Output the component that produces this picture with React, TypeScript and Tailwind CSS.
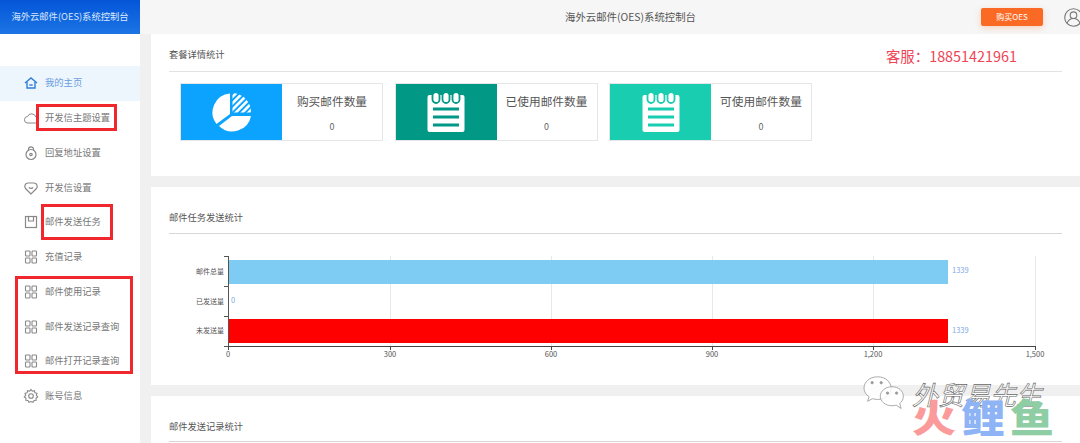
import React from "react";

const font = { fontFamily: '"Noto Sans CJK SC", "Noto Sans", sans-serif' };

function HomeIcon() {
  return (
    <svg width="16" height="16" viewBox="0 0 16 16" fill="none" stroke="#2f7fd8" strokeWidth="1.4">
      <path d="M2 8 8 3l6 5" />
      <path d="M4 7v6h8V7" />
      <path d="M6.300 10h3.400" />
    </svg>
  );
}
function CloudIcon() {
  return (
    <svg width="16" height="16" viewBox="0 0 16 16" fill="none" stroke="#888" strokeWidth="1">
      <path d="M4 13h8.500a3 3 0 0 0 .4-6A4.500 4.500 0 0 0 4.500 6.500 3.300 3.300 0 0 0 4 13Z" />
    </svg>
  );
}
function LockIcon() {
  return (
    <svg width="16" height="16" viewBox="0 0 16 16" fill="none" stroke="#888" strokeWidth="1.200">
      <circle cx="8" cy="9.500" r="5" />
      <path d="M5.500 5.500V4.300a2.500 2.500 0 0 1 5 0v1.200" />
      <circle cx="8" cy="9.500" r="1.200" />
    </svg>
  );
}
function HeartIcon() {
  return (
    <svg width="16" height="16" viewBox="0 0 16 16" fill="none" stroke="#888" strokeWidth="1.200">
      <path d="M8 14 2.500 8.500C1 6.500 2 3 5 3h6c3 0 4 3.500 2.500 5.500Z" />
      <path d="M5.800 7.500c1.300 1.100 3.100 1.100 4.400 0" />
    </svg>
  );
}
function SaveIcon() {
  return (
    <svg width="16" height="16" viewBox="0 0 16 16" fill="none" stroke="#888" strokeWidth="1.200">
      <rect x="2.500" y="2.500" width="11" height="11" />
      <path d="M5.500 2.500v4.500h5V2.500" />
    </svg>
  );
}
function GridIcon() {
  return (
    <svg width="16" height="16" viewBox="0 0 16 16" fill="none" stroke="#888" strokeWidth="1.100">
      <rect x="2.500" y="2" width="4.500" height="5" rx="0.800" />
      <rect x="9" y="2" width="4.500" height="5" rx="0.800" />
      <rect x="2.500" y="9" width="4.500" height="5" rx="0.800" />
      <rect x="9" y="9" width="4.500" height="5" rx="0.800" />
    </svg>
  );
}
function GearIcon() {
  return (
    <svg width="16" height="16" viewBox="0 0 16 16" fill="none" stroke="#888" strokeWidth="1.100">
      <path d="M8 1.500 9.300 3.200 11.400 2.600 11.900 4.700 14 5.300 13.300 7.300 14.700 8.900 13 10.200 13.200 12.300 11.100 12.500 10 14.300 8 13.500 6 14.300 4.900 12.500 2.800 12.300 3 10.200 1.300 8.900 2.700 7.300 2 5.300 4.100 4.700 4.600 2.600 6.700 3.200Z" />
      <circle cx="8" cy="8" r="2.300" />
    </svg>
  );
}
function PieIcon() {
  return (
    <svg width="42" height="42" viewBox="0 0 42 42">
      <defs>
        <pattern id="hatch" width="4.500" height="4.500" patternUnits="userSpaceOnUse" patternTransform="rotate(-45)">
          <rect width="4.500" height="2.600" fill="#fff" />
        </pattern>
      </defs>
      <path d="M19 2.500A19 19 0 0 0 5.500 33L19 23Z" fill="#fff" />
      <path d="M21.500 2a19 19 0 0 1 18.500 19.500L21.500 21.500Z" fill="url(#hatch)" />
      <path d="M21 25 8 35a19 19 0 0 0 32-10Z" fill="#fff" />
    </svg>
  );
}
function NoteIcon({ color }: { color: string }) {
  return (
    <svg width="38" height="42" viewBox="0 0 38 42">
      <rect x="0.500" y="4" width="37" height="37" rx="2" fill="#fff" />
      {[9, 19, 29].map((x) => (
        <rect key={x} x={x - 3.5} y="1" width="7" height="11" rx="3.500" fill="#fff" stroke={color} strokeWidth="1.800" />
      ))}
      {[18, 26, 34].map((y) => (
        <rect key={y} x="6" y={y - 1.5} width="26" height="3" fill={color} />
      ))}
    </svg>
  );
}
function UserIcon() {
  return (
    <svg width="19" height="19" viewBox="0 0 19 19" fill="none" stroke="#777" strokeWidth="1.100">
      <circle cx="9.500" cy="9.500" r="8.800" />
      <circle cx="9.500" cy="7.200" r="3.300" />
      <path d="M3 15.500c1.100-3.300 3.400-5 6.500-5s5.400 1.700 6.500 5" />
    </svg>
  );
}
function WeChatIcon() {
  return (
    <svg width="46" height="38" viewBox="0 0 46 42" fill="#ffffffd0" stroke="#999" strokeWidth="0.900">
      <path d="M17 2C8 2 2 8 2 14.500c0 4 2.200 7.300 5.600 9.500L6 29l5.500-2.800c2 .6 3.700.8 5.500.8 9 0 15-6 15-12.500S26 2 17 2Z" />
      <path d="M33 13c-7.500 0-13 5-13 10.500S25.500 34 33 34c1.500 0 3-.2 4.500-.7L43 37l-1.500-5.500c2.500-2 4-4.800 4-8C45.500 18 40.500 13 33 13Z" />
      <circle cx="11" cy="8.500" r="1.300" fill="#999" />
      <circle cx="21" cy="8.500" r="1.300" fill="#999" />
      <circle cx="28" cy="20" r="1.300" fill="#999" />
      <circle cx="38" cy="20" r="1.300" fill="#999" />
    </svg>
  );
}

const menu: { label: string; icon: React.ReactNode; active?: boolean }[] = [
  { label: "我的主页", icon: <HomeIcon />, active: true },
  { label: "开发信主题设置", icon: <CloudIcon /> },
  { label: "回复地址设置", icon: <LockIcon /> },
  { label: "开发信设置", icon: <HeartIcon /> },
  { label: "邮件发送任务", icon: <SaveIcon /> },
  { label: "充值记录", icon: <GridIcon /> },
  { label: "邮件使用记录", icon: <GridIcon /> },
  { label: "邮件发送记录查询", icon: <GridIcon /> },
  { label: "邮件打开记录查询", icon: <GridIcon /> },
  { label: "账号信息", icon: <GearIcon /> },
];

function Sidebar() {
  return (
    <aside className="relative w-[140px] h-full shrink-0 bg-white">
      <div className="h-[34px] flex items-center justify-center text-[9.3px] text-[#dbe8fb] bg-gradient-to-b from-[#0555d8] to-[#1c74e4]">
        海外云邮件(OES)系统控制台
      </div>
      <nav className="pt-[32px] flex flex-col">
        {menu.map((m) => (
          <div
            key={m.label}
            className={`h-[34.75px] flex items-center gap-[6px] pl-[23px] text-[9.3px] ${
              m.active ? "bg-[#edf5fd] text-[#6b9de2]" : "text-[#777]"
            }`}
          >
            {m.icon}
            <span>{m.label}</span>
          </div>
        ))}
      </nav>
      <div className="absolute left-[36px] top-[104px] w-[81px] h-[27px] border-[3px] border-[#f0282e]" />
      <div className="absolute left-[41px] top-[204px] w-[72px] h-[36px] border-[3px] border-[#f0282e]" />
      <div className="absolute left-[15px] top-[276px] w-[118px] h-[98px] border-[3px] border-[#f0282e]" />
    </aside>
  );
}

function StatCard({ label, bg, icon }: { label: string; bg: string; icon: React.ReactNode }) {
  return (
    <div className="flex w-[203px] h-[58px] border border-[#e6e6e6] bg-white">
      <div className={`w-[101px] h-full flex items-center justify-center ${bg}`}>{icon}</div>
      <div className="flex-1 flex flex-col items-center pt-[8px]">
        <span className="text-[11.7px] leading-[18px] text-[#555]">{label}</span>
        <span className="mt-[11px] text-[9px] leading-[12px] text-[#666]">0</span>
      </div>
    </div>
  );
}

function Chart() {
  const ticks = [
    { x: 228, t: "0" },
    { x: 390, t: "300" },
    { x: 551, t: "600" },
    { x: 712, t: "900" },
    { x: 873, t: "1,200" },
    { x: 1035, t: "1,500" },
  ];
  const ox = 151;
  const oy = 240;
  return (
    <svg width="929" height="130" viewBox={`${ox} ${oy} 929 130`} className="block">
      {ticks.slice(1).map((k) => (
        <line key={k.x} x1={k.x + 0.5} y1="256" x2={k.x + 0.5} y2="346" stroke="#e8e8e8" />
      ))}
      <rect x="228" y="260" width="720" height="24" fill="#7ecbf3" />
      <rect x="228" y="319" width="720" height="24" fill="#ff0000" />
      <line x1="228.500" y1="256" x2="228.500" y2="350" stroke="#555" />
      <line x1="224" y1="346.500" x2="1035" y2="346.500" stroke="#444" />
      {[256, 286, 316, 346].map((y) => (
        <line key={y} x1="224" y1={y + 0.5} x2="228" y2={y + 0.5} stroke="#555" />
      ))}
      {ticks.map((k) => (
        <g key={k.t}>
          <line x1={k.x + 0.5} y1="346" x2={k.x + 0.5} y2="350" stroke="#444" />
          <text x={k.x} y="357" textAnchor="middle" fontSize="7.500" fill="#555">
            {k.t}
          </text>
        </g>
      ))}
      {[
        { y: 274, t: "邮件总量" },
        { y: 304, t: "已发送量" },
        { y: 333, t: "未发送量" },
      ].map((l) => (
        <text key={l.t} x="224" y={l.y} textAnchor="end" fontSize="7" fill="#555">
          {l.t}
        </text>
      ))}
      <text x="952" y="273" fontSize="7.500" fill="#7fa8e8">1339</text>
      <text x="231" y="303" fontSize="7.500" fill="#7fa8e8">0</text>
      <text x="952" y="333" fontSize="7.500" fill="#7fa8e8">1339</text>
    </svg>
  );
}

export default function App() {
  return (
    <div style={font} className="relative w-[1080px] h-[443px] overflow-hidden flex bg-[#f0f0f0]">
      <Sidebar />
      <div className="flex-1 min-w-0 flex flex-col">
        <header className="h-[34px] shrink-0 bg-[#f6f6f6] flex items-center">
          <div className="flex-1 pl-[140px] text-center text-[10.4px] text-[#555]">海外云邮件(OES)系统控制台</div>
          <button className="w-[62px] h-[18px] mr-[21px] rounded-[2px] bg-[#fb6a25] text-white text-[8px] shadow-[0_2px_6px_rgba(251,106,37,0.25)]">
            购买OES
          </button>
          <div className="w-[16px] overflow-hidden">
            <UserIcon />
          </div>
        </header>
        <main className="flex-1 min-h-0 pl-[11px] flex flex-col gap-[11px]">
          <section className="h-[142px] shrink-0 bg-white pt-[11px] px-[18px]">
            <div className="h-[27px] border-b border-[#e2e2e2] flex items-start justify-between">
              <span className="text-[9.25px] leading-[18px] text-[#555]">套餐详情统计</span>
              <span className="text-[14.4px] leading-[22px] text-[#ee4455] mr-[45px]">客服：18851421961</span>
            </div>
            <div className="mt-[11px] pl-[11px] flex gap-[11.5px]">
              <StatCard label="购买邮件数量" bg="bg-[#0ca3ff]" icon={<PieIcon />} />
              <StatCard label="已使用邮件数量" bg="bg-[#029886]" icon={<NoteIcon color="#029886" />} />
              <StatCard label="可使用邮件数量" bg="bg-[#19cdb0]" icon={<NoteIcon color="#19cdb0" />} />
            </div>
          </section>
          <section className="h-[198px] shrink-0 bg-white pt-[21px]">
            <div className="mx-[18px] h-[26px] border-b border-[#d8d8d8] text-[9.25px] leading-[18px] text-[#555]">
              邮件任务发送统计
            </div>
            <div className="mt-[6px]">
              <Chart />
            </div>
          </section>
          <section className="flex-1 bg-white pt-[21px] px-[18px]">
            <div className="h-[25px] border-b border-[#d8d8d8] text-[9.25px] leading-[18px] text-[#555]">
              邮件发送记录统计
            </div>
          </section>
        </main>
      </div>
      <div className="absolute left-[860px] top-[375px]">
        <WeChatIcon />
      </div>
      <div
        className="absolute left-[912px] top-[376px] text-[26px] leading-[36px] italic text-white whitespace-nowrap"
        style={{ WebkitTextStroke: "0.6px #666" }}
      >
        外贸易先生
      </div>
      <div className="absolute left-[912px] top-[396px] h-[44px] flex gap-[5px] text-[44px] leading-[44px] font-black whitespace-nowrap origin-top scale-y-[0.87]">
        <span className="text-[#fb9a9a]">火</span>
        <span className="text-[#8fb4f5]">鲤</span>
        <span className="text-[#8fcda4]">鱼</span>
      </div>
    </div>
  );
}
